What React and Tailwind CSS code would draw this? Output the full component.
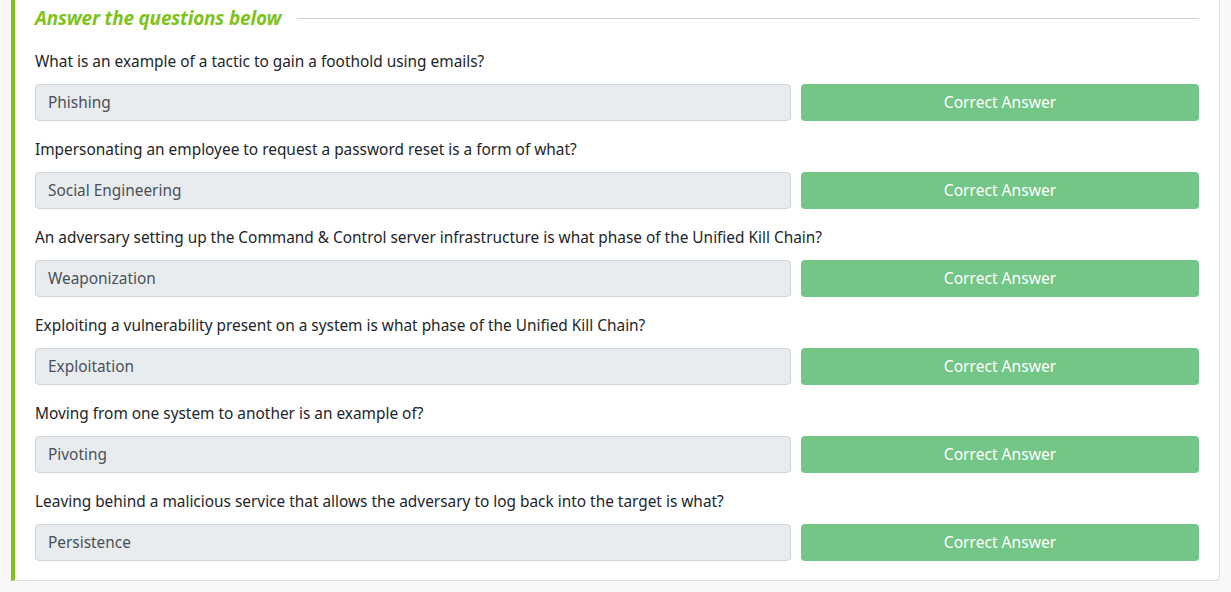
import React from 'react';

const questions = [
  ['What is an example of a tactic to gain a foothold using emails?', 'Phishing'],
  ['Impersonating an employee to request a password reset is a form of what?', 'Social Engineering'],
  ['An adversary setting up the Command & Control server infrastructure is what phase of the Unified Kill Chain?', 'Weaponization'],
  ['Exploiting a vulnerability present on a system is what phase of the Unified Kill Chain?', 'Exploitation'],
  ['Moving from one system to another is an example of?', 'Pivoting'],
  ['Leaving behind a malicious service that allows the adversary to log back into the target is what?', 'Persistence'],
];

const App = () => {
  return (
    <div className="min-h-[592px] bg-[#f8f8f8] pl-[11px] pr-[11px] pb-[10px]" style={{ fontFamily: '"Noto Sans", sans-serif' }}>
      <div className="bg-white border-l-4 border-l-[#7ec31c] border-r border-b border-[#dedede] rounded-br-[4px] pl-[20px] pr-[20px] pb-[15px]">
        <div className="flex items-center gap-4 h-[37px]">
          <h4 className="text-[19px] font-bold italic text-[#7ec31c] whitespace-nowrap tracking-[-0.2px]">Answer the questions below</h4>
          <div className="flex-1 h-px bg-[#d0d0d0]" />
        </div>
        <div className="flex flex-col">
          {questions.map(([q, a]) => (
            <div key={a} className="h-[88px] flex flex-col">
              <p className="text-[15.4px] text-[#212529] h-[47px] pt-[2px] flex items-center">{q}</p>
              <div className="flex gap-[10px]">
                <div className="flex-1 h-[37px] bg-[#e9ecef] border border-[#ced4da] rounded-[4px] px-3 flex items-center text-[15.4px] text-[#495057]">
                  {a}
                </div>
                <button className="w-[398px] h-[37px] bg-[#74c686] rounded-[4px] text-white text-[15.6px]">
                  Correct Answer
                </button>
              </div>
            </div>
          ))}
        </div>
      </div>
    </div>
  );
};

export default App;
